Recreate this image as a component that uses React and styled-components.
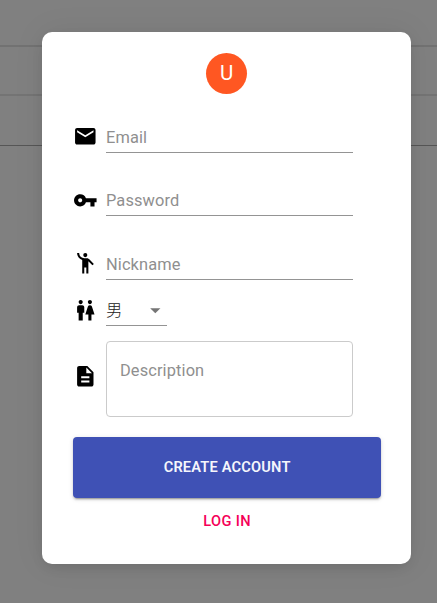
import React from "react";
import styled, { createGlobalStyle } from "styled-components";
import {
  MdEmail,
  MdVpnKey,
  MdEmojiPeople,
  MdWc,
  MdDescription,
  MdArrowDropDown,
} from "react-icons/md";

const GlobalStyle = createGlobalStyle`
  * { box-sizing: border-box; }
  body { margin: 0; font-family: Roboto, "Noto Sans CJK JP", sans-serif; }
`;

const Page = styled.div`
  position: relative;
  height: 603px;
  overflow: hidden;
  background: #808080;
`;

const TableLine = styled.div`
  height: ${(p) => p.$height}px;
  border-bottom: ${(p) => p.$width}px solid ${(p) => p.$color};
`;

const Overlay = styled.div`
  position: absolute;
  inset: 0;
  padding: 32px 0 0 42.3px;
`;

const Dialog = styled.form`
  display: flex;
  flex-direction: column;
  width: 369px;
  height: 531.5px;
  padding: 20.5px 30.5px 0 31.2px;
  border-radius: 10px;
  background: #fff;
  box-shadow: 0 5px 14px -3px rgba(0, 0, 0, 0.12), 0 0 32px rgba(0, 0, 0, 0.07);
`;

const Avatar = styled.div`
  display: flex;
  align-items: center;
  justify-content: center;
  align-self: center;
  width: 41px;
  height: 41px;
  margin-right: 0.8px;
  margin-bottom: 30.5px;
  border-radius: 50%;
  background: #ff5722;
  color: #fff;
  font-size: 20.5px;
`;

const Row = styled.div`
  display: flex;
  align-items: flex-start;
  height: ${(p) => p.$height}px;
`;

const IconSlot = styled.div`
  display: flex;
  width: 24.6px;
  margin: ${(p) => p.$top}px 7.9px 0 0;
  font-size: 24.6px;
  color: #000;
`;

const Field = styled.div`
  width: 247px;
  height: 29px;
  border-bottom: 1px solid #949494;
  color: #8f8f8f;
  font-size: 16.4px;
  letter-spacing: 0.12px;
  line-height: 27px;
`;

const Select = styled(Field)`
  display: flex;
  justify-content: space-between;
  width: 61.5px;
  height: 30px;
  color: #222;
  font-weight: 300;
  line-height: 29px;
`;

const Arrow = styled(MdArrowDropDown)`
  margin-top: 2px;
  color: #757575;
  font-size: 24.6px;
`;

const TextArea = styled.div`
  width: 247px;
  height: 75.5px;
  padding: 18.5px 13px;
  border: 1px solid #cbcbcb;
  border-radius: 4px;
  color: #8f8f8f;
  font-size: 16.4px;
  letter-spacing: 0.12px;
  line-height: 20px;
`;

const SubmitButton = styled.button`
  height: 61.2px;
  padding: 0 0 1.5px;
  border: 0;
  border-radius: 4px;
  background: #3f51b5;
  box-shadow: 0 3px 1px -2px rgba(0, 0, 0, 0.2), 0 2px 2px rgba(0, 0, 0, 0.14),
    0 1px 5px rgba(0, 0, 0, 0.12);
  color: #f5f6fc;
  font: 600 14.6px Roboto, sans-serif;
  letter-spacing: 0.2px;
`;

const LoginButton = styled.button`
  align-self: center;
  height: 36px;
  margin-top: 5.3px;
  padding: 0 8px;
  border: 0;
  background: transparent;
  color: #f50057;
  font: 500 14.6px Roboto, sans-serif;
  letter-spacing: 0.35px;
`;

const fields = [
  { label: "Email", Icon: MdEmail, height: 63, iconTop: 0.3 },
  { label: "Password", Icon: MdVpnKey, height: 64, iconTop: 0.8 },
  { label: "Nickname", Icon: MdEmojiPeople, height: 45, iconTop: 0.3 },
];

export default function App() {
  return (
    <>
      <GlobalStyle />
      <Page>
        <TableLine $height={47} $width={2} $color="#727272" />
        <TableLine $height={49} $width={2} $color="#747474" />
        <TableLine $height={50} $width={1} $color="#565656" />
        <Overlay>
          <Dialog>
            <Avatar>U</Avatar>
            {fields.map(({ label, Icon, height, iconTop }) => (
              <Row key={label} $height={height}>
                <IconSlot $top={iconTop}>
                  <Icon />
                </IconSlot>
                <Field>{label}</Field>
              </Row>
            ))}
            <Row $height={45}>
              <IconSlot $top={1.8}>
                <MdWc />
              </IconSlot>
              <Select>
                男
                <Arrow />
              </Select>
            </Row>
            <Row $height={96}>
              <IconSlot $top={23.2}>
                <MdDescription />
              </IconSlot>
              <TextArea>Description</TextArea>
            </Row>
            <SubmitButton type="button">CREATE ACCOUNT</SubmitButton>
            <LoginButton type="button">LOG IN</LoginButton>
          </Dialog>
        </Overlay>
      </Page>
    </>
  );
}
